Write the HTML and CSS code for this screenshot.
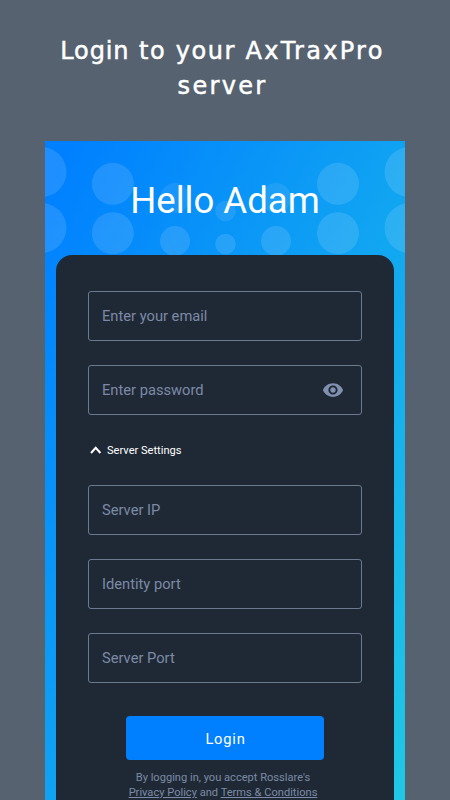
FILE: index.html
```html
<!DOCTYPE html>
<html lang="en">
<head>
    <meta charset="UTF-8">
    <meta name="viewport" content="width=device-width, initial-scale=1.0">
    <title>AxTraxPro Login</title>
    <link rel="stylesheet" href="styles.css">
</head>
<body>

    <h1 class="headline"><span class="tight">Login</span> to your <span class="wide">AxTraxPro</span><br><span class="wide">server</span></h1>

    <div class="phone">
        <svg class="bubbles" width="360" height="114" viewBox="0 0 360 114" fill="#fff" fill-opacity="0.12">
            <circle cx="-3.5" cy="31" r="25"/>
            <circle cx="-3.5" cy="87" r="25"/>
            <circle cx="67.8" cy="42.8" r="21"/>
            <circle cx="67.8" cy="92.2" r="21"/>
            <circle cx="130" cy="57" r="15" fill-opacity="0.08"/>
            <circle cx="130" cy="100" r="15"/>
            <circle cx="180.5" cy="70" r="10.3" fill-opacity="0.09"/>
            <circle cx="180.5" cy="103" r="10.3"/>
            <circle cx="231" cy="57" r="15" fill-opacity="0.08"/>
            <circle cx="231" cy="100" r="15"/>
            <circle cx="293" cy="42.8" r="21"/>
            <circle cx="293" cy="92.2" r="21"/>
            <circle cx="364.5" cy="31" r="25"/>
            <circle cx="364.5" cy="87" r="25"/>
        </svg>

        <h2 class="greeting">Hello Adam</h2>

        <form class="card">
            <input class="field" type="text" placeholder="Enter your email">

            <div class="password">
                <input class="field" type="password" placeholder="Enter password">
                <svg class="eye" width="22" height="22" viewBox="0 0 24 24">
                    <path fill="#8290b0" d="M12 4.5C7 4.5 2.73 7.61 1 12c1.73 4.39 6 7.5 11 7.5s9.27-3.11 11-7.5c-1.73-4.39-6-7.5-11-7.5zM12 17c-2.76 0-5-2.24-5-5s2.24-5 5-5 5 2.24 5 5-2.24 5-5 5zm0-8c-1.66 0-3 1.34-3 3s1.34 3 3 3 3-1.34 3-3-1.34-3-3-3z"/>
                </svg>
            </div>

            <div class="settings">
                <svg width="12" height="8" viewBox="0 0 12 8">
                    <path d="M1 7L5.7 1.8 10.4 7" fill="none" stroke="#fff" stroke-width="2"/>
                </svg>
                <span>Server Settings</span>
            </div>

            <input class="field" type="text" placeholder="Server IP">
            <input class="field" type="text" placeholder="Identity port">
            <input class="field" type="text" placeholder="Server Port">

            <button class="login" type="button">Login</button>

            <p class="terms">By logging in, you accept Rosslare's<br><a>Privacy Policy</a> and <a>Terms &amp; Conditions</a></p>
        </form>
    </div>

</body>
</html>
```

FILE: styles.css
```css
* {
    margin: 0;
    padding: 0;
    box-sizing: border-box;
}

body {
    font-family: Roboto, sans-serif;
    background: #566270;
    height: 800px;
    overflow: hidden;
    display: flex;
    flex-direction: column;
    align-items: center;
    color: #fff;
}

/* Headline */
.headline {
    width: 100%;
    height: 141px;
    padding: 34px 5px 0 0;
    flex-shrink: 0;
    font-family: 'DejaVu Sans', sans-serif;
    font-size: 24px;
    line-height: 35px;
    font-weight: 400;
    letter-spacing: 1.5px;
    word-spacing: 0.5px;
    text-align: center;
    white-space: nowrap;
    -webkit-text-stroke: 0.5px #fff;
}

.tight {
    letter-spacing: 0.9px;
}

.wide {
    letter-spacing: 2.3px;
}

/* Phone screen */
.phone {
    position: relative;
    width: 360px;
    height: 659px;
    overflow: hidden;
    background: linear-gradient(to bottom right, #0080ff 4%, #20c8e5 100%);
}

.bubbles {
    position: absolute;
    top: 0;
    left: 0;
}

.greeting {
    position: relative;
    height: 114px;
    padding-top: 38px;
    font-size: 36.6px;
    line-height: 44px;
    font-weight: 400;
    text-align: center;
}

/* Form */
.card {
    position: relative;
    width: 338px;
    height: 600px;
    margin: 0 auto;
    padding: 36px 32px 0;
    border-radius: 16px 16px 0 0;
    background: #1f2935;
}

.field {
    display: block;
    width: 274px;
    height: 50px;
    margin-bottom: 24px;
    padding: 0 13px;
    border: 1px solid #6c7a90;
    border-radius: 3px;
    background: transparent;
    font-family: inherit;
    font-size: 14.7px;
    color: #fff;
    outline: none;
}

.field::placeholder {
    color: #7c8aa6;
    opacity: 1;
}

.password {
    position: relative;
}

.eye {
    position: absolute;
    top: 14px;
    right: 18px;
}

.settings {
    display: flex;
    align-items: center;
    gap: 5px;
    height: 22px;
    margin: 0 0 24px 2px;
    font-size: 11.1px;
}

.login {
    display: block;
    width: 198px;
    height: 44px;
    margin: 33px auto 0;
    padding: 2px 0 0 1px;
    border: none;
    border-radius: 4px;
    background: #0080ff;
    color: #fff;
    font-family: inherit;
    font-size: 14.7px;
    font-weight: 400;
    letter-spacing: 0.8px;
}

.terms {
    margin-top: 10px;
    padding-right: 4px;
    font-size: 11.1px;
    line-height: 15px;
    text-align: center;
    white-space: nowrap;
    color: #7c8aa6;
}

.terms a {
    text-decoration: underline;
}
```
